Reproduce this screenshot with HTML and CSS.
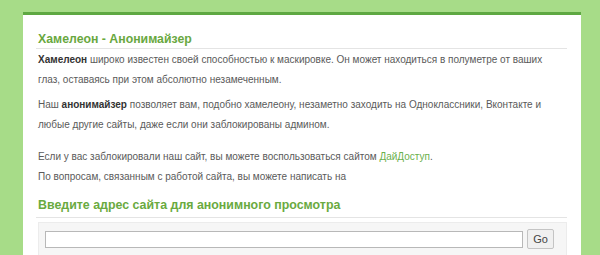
FILE: index.html
```html
<!DOCTYPE html>
<html lang="ru">
<head>
<meta charset="utf-8">
<title>Хамелеон - Анонимайзер</title>
<link rel="stylesheet" href="styles.css">
</head>
<body>
<div class="card">
  <h1 class="title">Хамелеон - Анонимайзер</h1>
  <p class="p1"><b>Хамелеон</b> широко известен своей способностью к маскировке. Он может находиться в полуметре от ваших глаз, оставаясь при этом абсолютно незамеченным.</p>
  <p class="p2">Наш <b>анонимайзер</b> позволяет вам, подобно хамелеону, незаметно заходить на Одноклассники, Вконтакте и любые другие сайты, даже если они заблокированы админом.</p>
  <p class="p3">Если у вас заблокировали наш сайт, вы можете воспользоваться сайтом <a href="#">ДайДоступ</a>.<br>По вопросам, связанным с работой сайта, вы можете написать на</p>
  <h2 class="subtitle">Введите адрес сайта для анонимного просмотра</h2>
  <form class="urlbox">
    <input class="url" type="text">
    <button class="go" type="button">Go</button>
  </form>
</div>
</body>
</html>
```
FILE: styles.css
```css
html, body { margin: 0; padding: 0; }
body {
  background: #a7dc88;
  font-family: "Liberation Sans", Arial, sans-serif;
  height: 255px;
  overflow: hidden;
}
.card {
  margin: 12px 0 0 23px;
  width: 531px;
  height: 300px;
  background: #fff;
  border-top: 3px solid #5ea842;
  padding: 0 14px 0 13px;
}
.title {
  margin: 0;
  padding: 16px 0 1px 2px;
  font-size: 12.3px;
  line-height: 16px;
  font-weight: bold;
  color: #69a83f;
  border-bottom: 1px solid #e4e4e4;
}
p {
  margin: 0;
  padding: 0 15px 0 2px;
  font-size: 10px;
  line-height: 20px;
  color: #5a5a5a;
}
p b { color: #333; }
.p1 { margin-top: 1px; }
.p2 { margin-top: 5px; }
.p3 { margin-top: 12px; }
a { color: #6ab04c; text-decoration: none; }
.subtitle {
  margin: 8px 0 0;
  padding: 0 0 2px 2px;
  font-size: 12.4px;
  line-height: 20px;
  font-weight: bold;
  color: #6aaa3f;
  border-bottom: 1px solid #e4e4e4;
}
.urlbox {
  margin: 4px 0 0 2px;
  background: #f6f6f6;
  border: 1px solid #ececec;
  padding: 6px 12px 6px 6px;
  display: flex;
  align-items: center;
  gap: 4px;
}
.url {
  flex: 1;
  height: 17px;
  box-sizing: border-box;
  border: 1px solid #b8b8b8;
  background: #fff;
  margin: 0;
}
.go {
  width: 27px;
  height: 20px;
  margin: 0;
  padding: 0;
  font-family: "Liberation Sans", Arial, sans-serif;
  font-size: 11px;
  color: #444;
  background: #f0f0f0;
  border: 1px solid #c4c4c4;
  border-radius: 2px;
}
```
